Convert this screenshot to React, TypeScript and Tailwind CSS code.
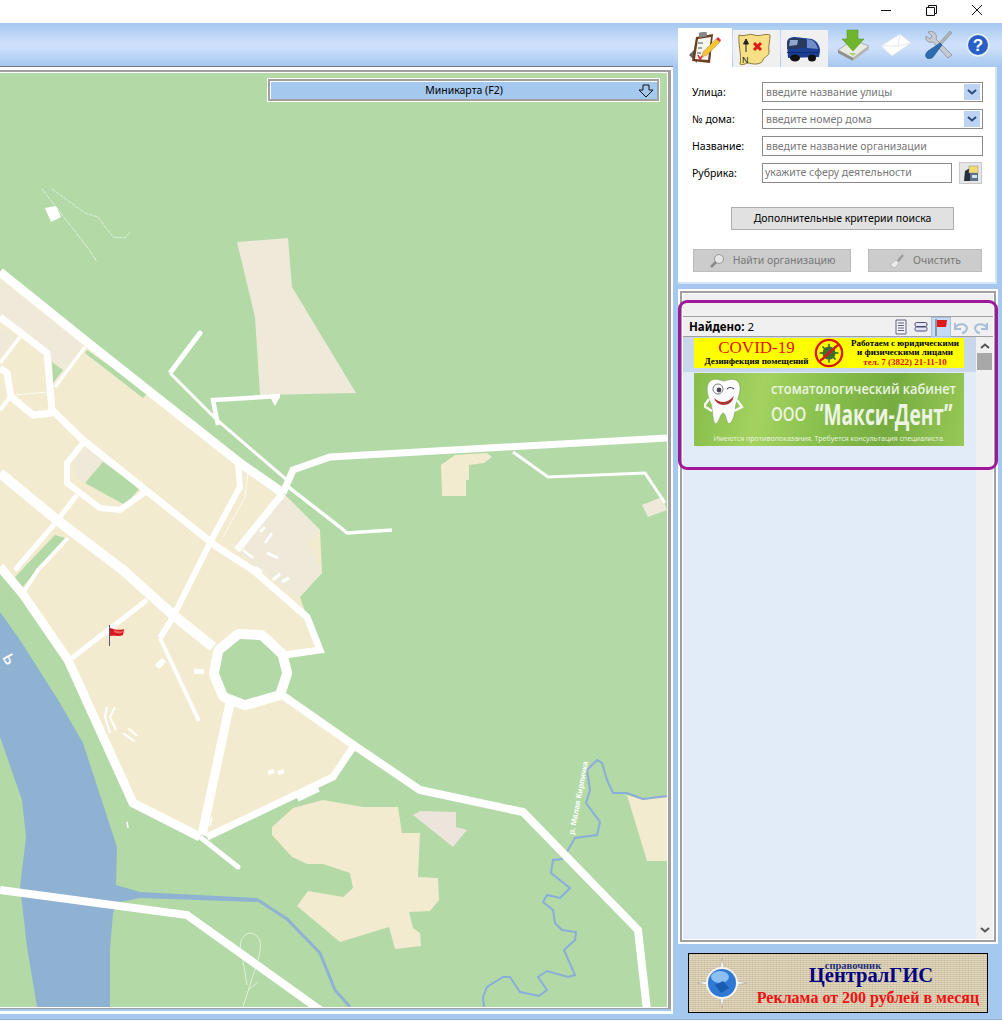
import React from "react";

const ROADS: [number, string][] = [
  [9, "0,272 87,342 240,463 283,493"],
  [3.5, "287,486 340,527 347,533 392,530"],
  [7, "283,493 293,470 330,457 667,438"],
  [5, "200,333 170,373"],
  [3, "170,373 217,420 287,480"],
  [4.5, "280,396 213,400 218,425"],
  [7, "0,317 17,330 47,353 52,410 83,440 217,547 253,570 307,617 320,650 285,655"],
  [7, "0,368 7,373 11,397 33,415 52,413"],
  [4, "10,397 0,410"],
  [3.5, "20,337 0,363"],
  [3.5, "85,347 55,387"],
  [0.8, "15,395 47,392"],
  [10, "0,473 57,520 123,570 173,615 213,647"],
  [6, "238,463 240,487 213,537 173,617 160,638"],
  [4, "160,638 199,721"],
  [7, "283,493 237,550"],
  [5, "77,495 52,527 15,570"],
  [4, "68,538 38,570 25,590"],
  [9, "0,567 22,593 68,660 133,803 200,837"],
  [5, "200,837 238,867"],
  [5, "72,658 147,600"],
  [9, "230,703 202,835"],
  [7, "207,837 333,777 353,747"],
  [8, "282,695 358,748 420,790 523,812 638,930 647,1010"],
  [8, "0,890 187,915 320,1010"],
  [6, "83,443 67,463 67,483 100,508 120,510 145,492"],
  [3, "513,452 548,477 645,473 665,503"],
  [2, "107,707 105,717 110,733"],
  [2, "115,707 110,717 116,730"],
  [2, "123,733 134,741"],
  [2, "128,728 137,736"],
  [6, "157,667 164,660"],
  [5, "194,671 204,672"],
  [4, "268,773 274,771"],
  [4, "278,773 284,771"],
  [8, "297,798 318,788"],
  [1.5, "127,822 128,828"],
  [1.5, "212,817 210,826"],
  [2.5, "260,532 265,527"],
  [2.5, "265,543 272,533"],
  [2.5, "243,550 253,558"],
  [2.5, "267,553 278,558"],
  [3, "255,567 262,572"],
  [3, "273,580 280,574"],
  [3, "282,582 289,578"],
  [0.8, "248,473 245,497 223,537"],
];

const Map = () => (
  <svg viewBox="0 73 667 934" className="block h-[934px] w-[667px]">
    <rect x="0" y="73" width="667" height="934" fill="#b2d9a6" />
    <polygon
      fill="#f3ebcf"
      points="0,272 283,493 320,530 322,573 300,597 307,617 320,650 285,655 282,695 358,748 333,777 207,837 132,803 68,660 22,593 0,567"
    />
    <g fill="#efe9da">
      <polygon points="0,280 83,345 65,370 50,357 20,330 0,315" />
      <polygon points="0,330 17,337 0,357" />
      <polygon points="283,493 320,530 308,543 322,573 298,597 237,552" />
      <polygon points="237,242 288,238 292,287 356,393 260,395 255,317" />
      <polygon points="642,505 662,497 667,510 648,517" />
      <polygon points="87,447 103,462 85,483 77,477 73,460" />
    </g>
    <polygon fill="#ebe5dc" points="413,815 420,811 456,812 456,827 467,830 453,847" />
    <g fill="#f3ebcf">
      <polygon points="441,465 455,455 487,453 492,457 484,463 469,465 469,480 466,480 466,496 442,496" />
      <polygon points="272,827 293,808 323,800 363,807 398,807 402,833 420,833 418,877 438,878 439,900 430,911 409,912 413,928 420,933 421,946 395,949 389,927 340,942 297,906 308,891 343,897 353,888 350,873 323,864 307,864 292,857 272,835" />
      <polygon points="627,795 643,800 667,797 667,861 647,861" />
    </g>
    <g fill="#b2d9a6">
      <polygon points="52,362 63,370 53,383" />
      <polygon points="87,350 148,393 143,398 85,353" />
      <polygon points="103,462 140,488 125,505 85,483" />
      <polygon points="55,535 65,538 35,572 22,588 14,578" />
    </g>
    <polygon
      fill="#8fb2d3"
      points="0,612 20,640 60,703 83,743 117,847 116,885 140,892 258,898 258,902 140,898 116,903 113,913 110,950 110,1007 37,1007 27,947 22,903 20,887 26,837 22,800 0,737"
    />
    <polyline fill="none" stroke="#8fb2d3" strokeWidth="3" points="258,900 287,919 320,953 335,990 350,1007" />
    <polyline
      fill="none"
      stroke="#8aaddb"
      strokeWidth="2"
      points="667,796 643,799 627,793 613,793 607,780 602,763 597,760 587,770 590,790 586,803 600,822 597,835 575,838 568,850 562,859 553,860 551,873 570,888 560,898 547,895 543,902 553,910 555,923 562,930 576,932 575,940 564,950 575,975 568,977 547,971 538,977 547,990 539,996 520,992 510,977 503,977 487,987 483,997 484,1007"
    />
    {ROADS.map(([w, pts], i) => (
      <polyline key={i} fill="none" stroke="#fff" strokeWidth={w} strokeLinejoin="miter" points={pts} />
    ))}
    <circle cx="238" cy="867" r="2.5" fill="#fff" />
    <circle cx="200" cy="333" r="2.5" fill="#fff" />
    <polygon
      fill="#b2d9a6"
      stroke="#fff"
      strokeWidth="20"
      strokeLinejoin="round"
      paintOrder="stroke"
      points="240,639 260,640 278,657 282,673 276,691 245,700 227,693 219,673 223,653"
    />
    <polygon fill="#fff" points="45,208 56,206 61,217 51,222" />
    <polygon fill="#fff" points="270,397 280,397 275,406" />
    <g fill="none" stroke="#fff" strokeWidth="0.6">
      <polyline points="42,189 88,248 97,262" strokeDasharray="6 1" />
      <polyline points="52,189 85,213 98,217 113,237 125,238 130,232" strokeDasharray="4 1" />
      <path d="M243 1007 L258 960 C262 945 262 935 250 933 C240 935 238 945 243 960 L247 985" />
      <path d="M248 990 L258 982" />
    </g>
    <g fill="#fff">
      <text x="0" y="0" fontSize="8" fontWeight="700" transform="translate(574 835) rotate(-79)" fontFamily="Liberation Sans, sans-serif">
        р. Малая Кирпичка
      </text>
      <text x="0" y="0" fontSize="20" transform="translate(2 657) rotate(62)" fontFamily="Liberation Sans, sans-serif">
        ь
      </text>
    </g>
    <line x1="109.5" y1="625" x2="109.5" y2="646" stroke="#55586a" strokeWidth="1" />
    <path d="M110 628 C114 629 118 631 124 629 L123 635 C118 637 114 635 110 636 Z" fill="#d81820" />
    <path d="M114 630 C117 631 120 632 123 631 L122 633 C119 634 116 633 114 632 Z" fill="#f06060" />
  </svg>
);

const ClipboardIcon = () => (
  <svg viewBox="0 0 32 32" className="h-[32px] w-[32px]">
    <polygon points="0,23 8,15 8,31" fill="#666" />
    <polygon points="7,5 24,2 21,31 3,29" fill="#6b3f22" />
    <polygon points="9,7 22,5 19,28 6,27" fill="#f6f6f0" />
    <rect x="10" y="0" width="8" height="5" rx="1" fill="#888" transform="rotate(-8 14 3)" />
    <g stroke="#888" strokeWidth="1.4">
      <path d="M9 11 H14 M9 16 H13 M8 21 H12" />
    </g>
    <path d="M9 23 L11 27 L16 21" fill="none" stroke="#d22" strokeWidth="1.6" />
    <polygon points="14,20 27,7 31,10 18,23 13,25" fill="#f3c52e" stroke="#a86" strokeWidth="0.5" />
    <polygon points="27,7 29,5 32,8 31,10" fill="#d33" />
  </svg>
);

const MapIcon = () => (
  <svg viewBox="0 0 34 34" className="h-[34px] w-[34px]">
    <path
      d="M2 3 C8 5 12 1 17 3 C23 5 28 1 33 3 C33 10 31 14 32 20 C32 25 27 24 26 28 C25 32 18 33 12 31 C8 31 6 34 3 32 C5 24 1 12 2 3 Z"
      fill="#f6df84"
      stroke="#8d7a3a"
      strokeWidth="1"
    />
    <path d="M9 20 V9 M6.5 12 L9 7 L11.5 12 Z" stroke="#222" strokeWidth="1" fill="#222" />
    <text x="5" y="31" fontSize="9" fill="#222" fontFamily="Liberation Sans, sans-serif">
      N
    </text>
    <path d="M17 11 L24 18 M24 11 L17 18" stroke="#e01818" strokeWidth="3" />
  </svg>
);

const BusIcon = () => (
  <svg viewBox="0 0 34 26" className="h-[26px] w-[34px]">
    <path d="M1 7 C1 3 4 1 9 1 L26 3 C31 5 34 10 34 15 L33 21 L2 22 Z" fill="#1c3f96" />
    <path d="M2 4 C4 2 8 2 20 3 L20 12 L1 13 Z" fill="#2a3a5c" />
    <path d="M4 4 L12 4 L11 9 L3 10 Z" fill="#8fa8cc" />
    <path d="M21 3 L26 4 C29 6 31 9 32 13 L21 12 Z" fill="#6f8fc8" />
    <path d="M1 16 L33 16 L33 17 L1 17 Z" fill="#0f2a70" />
    <ellipse cx="9" cy="22" rx="5" ry="3.5" fill="#111" />
    <ellipse cx="26" cy="22" rx="4" ry="3.5" fill="#111" />
  </svg>
);

const DownloadIcon = () => (
  <svg viewBox="0 0 32 32" className="h-[32px] w-[32px]">
    <polygon points="1,21 16,11 32,17 16,29" fill="#e8ebe2" stroke="#9a9a9a" strokeWidth="0.7" />
    <polygon points="1,21 16,29 16,32 1,24" fill="#8f8f8f" />
    <polygon points="16,29 32,17 32,20 16,32" fill="#b5b5b5" />
    <polygon points="10,1 21,1 21,10 27,10 16,22 5,10 10,10" fill="#6fb62d" stroke="#4f8f1c" strokeWidth="0.5" />
    <polygon points="12,24 19,24 16,27" fill="#a8d26a" />
  </svg>
);

const MailIcon = () => (
  <svg viewBox="0 0 32 24" className="h-[24px] w-[32px]">
    <polygon points="1,13 20,1 31,10 12,23" fill="#ffffff" stroke="#d8dee6" strokeWidth="0.6" />
    <path d="M1 13 L18 13 L20 1 M18 13 L31 10" fill="none" stroke="#dde2e8" strokeWidth="0.8" />
  </svg>
);

const ToolsIcon = () => (
  <svg viewBox="0 0 28 28" className="h-[28px] w-[28px]">
    <path d="M3 1 L7 5 L5 8 L1 5 C0 10 4 12 8 11 L23 27 L27 24 L11 8 C13 3 8 -1 3 1 Z" fill="#c8ccd0" stroke="#7f8488" strokeWidth="0.7" />
    <path d="M27 2 L25 0 L14 12 L16 14 Z" fill="#aeb3b8" stroke="#777" strokeWidth="0.4" />
    <path d="M15 12 L17 14 L8 26 C6 28 2 28 1 26 C0 24 1 22 3 20 Z" fill="#2d6cb0" stroke="#1d4a80" strokeWidth="0.6" />
  </svg>
);

const HelpIcon = () => (
  <svg viewBox="0 0 24 24" className="h-[24px] w-[24px]">
    <circle cx="12" cy="12" r="11.5" fill="#e8eef8" />
    <circle cx="12" cy="12" r="10" fill="#2a5fc4" />
    <text x="12" y="18" fontSize="17" fontWeight="700" textAnchor="middle" fill="#fff" fontFamily="Liberation Sans, sans-serif">
      ?
    </text>
  </svg>
);

const Chevron = () => (
  <svg viewBox="0 0 10 6" className="h-[6px] w-[10px]">
    <path d="M1 1 L5 4.5 L9 1" fill="none" stroke="#2b4a80" strokeWidth="2" />
  </svg>
);

const Field = ({ label, text, combo }: { label: string; text: string; combo?: boolean }) => (
  <div className="flex h-[20px] items-center">
    <span className="w-[70px] text-[10.5px] leading-none text-black">{label}</span>
    <div className="flex h-[20px] w-[221px] items-center border border-[#8a8a8a] bg-white pl-[3px] text-[10.5px] text-[#777]">
      <span className="flex-1 pt-px">{text}</span>
      {combo && (
        <span className="mr-[2px] flex h-[16px] w-[16px] items-center justify-center bg-[#bcd3f3]">
          <Chevron />
        </span>
      )}
    </div>
  </div>
);

const SearchForm = () => (
  <div className="ml-[5px] flex h-[217px] w-[319px] flex-col border-b-2 border-r-2 border-[#d4e3f5] bg-white pl-[14px] pt-[15px]">
    <div className="flex flex-col gap-[7px]">
      <Field label="Улица:" text="введите название улицы" combo />
      <Field label="№ дома:" text="введите номер дома" combo />
      <Field label="Название:" text="введите название организации" />
      <div className="flex h-[20px] items-center">
        <span className="w-[70px] text-[10.5px] leading-none text-black">Рубрика:</span>
        <div className="flex h-[20px] w-[190px] items-center border border-[#8a8a8a] pl-[2px] text-[10.5px] text-[#777]">
          укажите сферу деятельности
        </div>
        <div className="ml-[7px] flex h-[22px] w-[23px] items-center justify-center border border-[#c8c8c8] bg-[#e6e6e6]">
          <svg viewBox="0 0 18 18" className="h-[18px] w-[18px]">
            <path d="M2 17 L3 7 L8 4 L8 17 Z" fill="#26303c" />
            <rect x="7" y="2" width="9" height="7" fill="#f2dc72" stroke="#889" strokeWidth="0.5" />
            <rect x="8" y="9" width="8" height="8" fill="#5d7288" />
            <rect x="10" y="11" width="5" height="3" fill="#cfe0ee" />
          </svg>
        </div>
      </div>
    </div>
    <div className="ml-[39px] mt-[24px] flex h-[23px] w-[223px] items-center justify-center border border-[#adadad] bg-[#e1e1e1] text-[10.5px] text-black">
      Дополнительные критерии поиска
    </div>
    <div className="mt-[19px] flex gap-[17px] pl-px">
      <div className="flex h-[23px] w-[158px] items-center justify-center gap-[8px] border border-[#bdbdbd] bg-[#cccccc] text-[10.5px] text-[#777]">
        <svg viewBox="0 0 16 16" className="h-[16px] w-[16px]">
          <circle cx="10" cy="6" r="4.5" fill="#e6e6e6" stroke="#999" />
          <path d="M7 9 L2 14" stroke="#888" strokeWidth="2.5" />
        </svg>
        Найти организацию
      </div>
      <div className="flex h-[23px] w-[114px] items-center justify-center gap-[8px] border border-[#bdbdbd] bg-[#cccccc] text-[10.5px] text-[#777]">
        <svg viewBox="0 0 16 16" className="h-[16px] w-[16px]">
          <path d="M1 12 L7 7 L10 10 L6 15 Z" fill="#ececec" stroke="#aaa" strokeWidth="0.6" />
          <path d="M9 8 L14 2" stroke="#999" strokeWidth="2" />
        </svg>
        Очистить
      </div>
    </div>
  </div>
);

const CovidBanner = () => (
  <div className="flex h-[30px] w-[270px] items-center bg-[#ffff00] [font-family:'Liberation_Serif',serif]">
    <div className="flex w-[119px] flex-col items-center pl-[6px]">
      <span className="text-[17px] leading-[16px] text-[#e01010]">COVID-19</span>
      <span className="whitespace-nowrap text-[9px] font-bold leading-[11px] text-black">Дезинфекция помещений</span>
    </div>
    <svg viewBox="0 0 32 32" className="ml-[1px] h-[30px] w-[30px] shrink-0">
      <circle cx="16" cy="16" r="14" fill="#ffff00" stroke="#d81818" strokeWidth="2.5" />
      <g stroke="#2f5a28" strokeWidth="1.6">
        <path d="M16 6 V26 M6 16 H26 M9 9 L23 23 M23 9 L9 23" />
      </g>
      <circle cx="16" cy="16" r="7" fill="#3d6e30" />
      <path d="M6 25 L26 7" stroke="#d81818" strokeWidth="2.5" />
    </svg>
    <div className="flex flex-1 flex-col items-center whitespace-nowrap pl-[2px] text-[9px] font-bold leading-[8.8px] text-black">
      <span>Работаем с юридическими</span>
      <span>и физическими лицами</span>
      <span className="mt-[2px] text-[#e01010]">тел. 7 (3822) 21-11-10</span>
    </div>
  </div>
);

const DentBanner = () => (
  <div className="relative mt-px flex h-[73px] w-[270px] flex-col overflow-hidden bg-[linear-gradient(100deg,#86bd4b_0%,#a4d25f_25%,#86be4c_50%,#76ac40_72%,#98c957_100%)] text-[#eef4e4] [font-family:'Open_Sans',sans-serif]">
    <div className="flex">
      <svg viewBox="0 0 40 50" className="ml-[10px] mt-[4px] h-[50px] w-[40px] shrink-0">
        <path d="M5 5 C11 0 15 3 20 4 C26 2 32 1 35 6 C38 13 34 21 32 27 C31 35 30 44 25 47 C22 45 22 36 19 36 C16 37 15 47 11 47 C8 42 9 33 7 27 C4 20 1 11 5 5 Z" fill="#fbfbfb" stroke="#7a9a5e" strokeWidth="0.6" />
        <path d="M5 22 L0 29 L8 34 M33 23 L38 30 L30 34" fill="none" stroke="#fbfbfb" strokeWidth="2.4" />
        <circle cx="14" cy="12" r="5" fill="#fff" stroke="#556" strokeWidth="0.8" />
        <circle cx="15" cy="13" r="2.4" fill="#445" />
        <path d="M23 12 Q26 9 30 12" fill="none" stroke="#445" strokeWidth="1.2" />
        <path d="M10 21 Q20 30 30 19 Q28 28 19 28 Q12 27 10 21 Z" fill="#a33" />
      </svg>
      <div className="ml-[27px] flex flex-col">
        <span className="mt-[7px] origin-left whitespace-nowrap text-[14px] font-semibold leading-[18px] scale-x-[0.91]">
          стоматологический кабинет
        </span>
        <div className="mt-[2px] flex items-center">
          <span className="w-[44px] origin-left text-[20px] font-semibold leading-[28px] scale-x-[0.75]">ООО</span>
          <span className="origin-left whitespace-nowrap text-[29px] font-bold leading-[28px] scale-x-[0.66]">
            “Макси-Дент”
          </span>
        </div>
      </div>
    </div>
    <span className="absolute bottom-[3px] left-0 w-full whitespace-nowrap text-center text-[7px] leading-[9px]">
      Имеются противопоказания. Требуется консультация специалиста.
    </span>
  </div>
);

const Toolbar = () => (
  <div className="flex items-center">
    <svg viewBox="0 0 14 16" className="h-[16px] w-[14px]">
      <path d="M2 1 H12 V15 H2 Z" fill="#eef0f6" stroke="#62647e" />
      <path d="M4 4 H10 M4 6.5 H10 M4 9 H10 M4 11.5 H10" stroke="#62647e" />
    </svg>
    <svg viewBox="0 0 14 12" className="ml-[6px] h-[12px] w-[14px]">
      <rect x="1" y="1.5" width="12" height="4" rx="1.5" fill="#e4e6f2" stroke="#4c4f78" />
      <rect x="1" y="6" width="12" height="4" rx="1.5" fill="#e4e6f2" stroke="#4c4f78" />
    </svg>
    <div className="ml-[3px] flex h-[20px] w-[20px] items-center justify-center border border-[#a8c0e0] bg-[#c5daf3]">
      <svg viewBox="0 0 14 18" className="h-[18px] w-[14px]">
        <line x1="2" y1="1" x2="2" y2="18" stroke="#556" />
        <path d="M3 2 H13 L12 9 H3 Z" fill="#e01818" />
      </svg>
    </div>
    <svg viewBox="0 0 14 14" className="ml-[3px] h-[14px] w-[14px]">
      <path d="M1 3 L1 9 L7 9 M1 8 C4 3 12 3 13 8 C13 11 10 13 8 13" fill="none" stroke="#a8bdd6" strokeWidth="2" />
    </svg>
    <svg viewBox="0 0 14 14" className="ml-[6px] mr-[4px] h-[14px] w-[14px]">
      <path d="M13 3 L13 9 L7 9 M13 8 C10 3 2 3 1 8 C1 11 4 13 6 13" fill="none" stroke="#a8bdd6" strokeWidth="2" />
    </svg>
  </div>
);

const Results = () => (
  <div className="relative ml-[5px] mt-[5px] h-[655px] w-[320px] border-2 border-white">
    <div className="h-full border-2 border-[#a0a0a0]">
      <div className="flex h-full flex-col border border-white bg-[#f0f0f0]">
        <div className="h-[23px] border-b border-[#a0a0a0]" />
        <div className="flex h-[20px] items-center justify-between border-b border-[#a0a0a0] pl-[6px] pr-px text-[11.5px] text-black">
          <span>
            <b className="font-bold">Найдено:</b> 2
          </span>
          <Toolbar />
        </div>
        <div className="flex min-h-0 flex-1">
          <div className="flex-1 bg-[#e1ecf8]">
            <div className="h-[35px] bg-[#c8d8ea] pl-[11px] pt-px">
              <CovidBanner />
            </div>
            <div className="pl-[11px]">
              <DentBanner />
            </div>
          </div>
          <div className="flex w-[17px] flex-col items-center bg-[#f0f0f0]">
            <svg viewBox="0 0 10 6" className="mt-[6px] h-[6px] w-[10px]">
              <path d="M1 5 L5 1.5 L9 5" fill="none" stroke="#555" strokeWidth="2" />
            </svg>
            <div className="mt-[4px] h-[17px] w-[15px] bg-[#a8a8a8]" />
            <svg viewBox="0 0 10 6" className="mb-[6px] mt-auto h-[6px] w-[10px]">
              <path d="M1 1 L5 4.5 L9 1" fill="none" stroke="#555" strokeWidth="2" />
            </svg>
          </div>
        </div>
      </div>
    </div>
    <div className="pointer-events-none absolute left-[-2px] top-[9px] h-[170px] w-[320px] rounded-[9px] border-[3.5px] border-[#a0189a]" />
  </div>
);

const AdBanner = () => (
  <div className="ml-[15px] mt-[9px] flex h-[60px] w-[300px] items-start border border-black bg-[#d9ceb4] [background-image:repeating-linear-gradient(0deg,#0000_0px,#0000_1px,#a8987a55_1px,#a8987a55_2px),repeating-linear-gradient(90deg,#0000_0px,#0000_1px,#fff6dc44_1px,#fff6dc44_3px)] [font-family:'Liberation_Serif',serif]">
    <svg viewBox="0 0 50 50" className="ml-[8px] h-[50px] w-[50px] shrink-0 self-center">
      <polygon points="25,0 29,21 50,25 29,29 25,50 21,29 0,25 21,21" fill="#f4f4f0" stroke="#a8a090" strokeWidth="0.5" />
      <circle cx="25" cy="25" r="16" fill="#f4f4f0" />
      <circle cx="25" cy="25" r="14" fill="#2f78d4" />
      <ellipse cx="23" cy="19" rx="9" ry="6" fill="#8cc0f0" />
      <path d="M18 27 L26 23 L32 30 L24 35 Z" fill="#1c5cb0" />
    </svg>
    <div className="ml-[9px] flex w-[224px] flex-col items-center">
      <span className="mr-[30px] mt-[7px] text-[10.5px] font-bold leading-[10px] text-[#24307a]">справочник</span>
      <span className="ml-[6px] mt-[-6px] text-[20.5px] font-bold leading-[20px] text-[#000080]">ЦентралГИС</span>
      <span className="mt-[5px] whitespace-nowrap text-[16px] font-bold leading-[16px] text-[#f01010]">
        Реклама от 200 рублей в месяц
      </span>
    </div>
  </div>
);

const Gradient = "bg-[linear-gradient(180deg,#a5c8ef_0%,#cddffa_45%,#cddffa_58%,#a5c8ef_100%)]";

export default function App() {
  return (
    <div className="flex h-[1021px] w-[1002px] flex-col overflow-hidden bg-white [font-family:'Noto_Sans',sans-serif]">
      {/* title bar */}
      <div className="flex h-[23px] shrink-0 items-center justify-end">
        <svg viewBox="0 0 110 23" className="h-[23px] w-[110px]">
          <g fill="none" stroke="#111" strokeWidth="1">
            <path d="M0 10.5 H10" />
            <path d="M45.5 7.5 H53.5 V15.5 H45.5 Z M47.5 7 V5.5 H55.5 V13.5 H54" />
            <path d="M91 5 L101 15 M101 5 L91 15" />
          </g>
        </svg>
        <div className="w-[11px]" />
      </div>

      <div className="flex min-h-0 flex-1 bg-[#a5c8ef]">
        {/* map side */}
        <div className="w-[673px] shrink-0">
          <div className={`h-[44px] border-b border-[#777] ${Gradient}`} />
          <div className="h-[947px] border-b-[3px] border-r-2 border-t-[3px] border-white">
            <div className="h-[939px] border-b-[3px] border-r-[3px] border-t-2 border-[#a0a0a0]">
              <div className="relative h-[936px] w-[668px] border-b border-r border-t border-white">
                <Map />
                <div className="absolute left-[267px] top-[5px] h-[24px] w-[393px] border border-white">
                  <div className="h-full border-2 border-[#a0a0a0]">
                    <div className="flex h-full items-center justify-center border-l border-t border-white bg-[#a5c8ef] text-[10.5px] text-black">
                      Миникарта (F2)
                      <svg viewBox="0 0 16 14" className="absolute right-[5px] h-[14px] w-[16px]">
                        <path d="M5 1 H11 V6 H15 L8 13 L1 6 H5 Z" fill="none" stroke="#111" strokeWidth="1" />
                      </svg>
                    </div>
                  </div>
                </div>
              </div>
            </div>
          </div>
        </div>

        {/* search side */}
        <div className="min-w-0 flex-1">
          <div className={`flex h-[44px] items-end pl-[5px] ${Gradient}`}>
            <div className="flex h-[39px] w-[54px] items-center justify-center bg-white">
              <ClipboardIcon />
            </div>
            <div className="ml-px flex h-[37px] w-[47px] items-center justify-center bg-[#f0f0f0] pr-[5px]">
              <MapIcon />
            </div>
            <div className="ml-px flex h-[37px] w-[47px] items-center justify-center bg-[#f0f0f0] pr-[3px]">
              <BusIcon />
            </div>
            <div className="mb-[6px] ml-[9px] flex items-center">
              <DownloadIcon />
              <div className="ml-[11px]">
                <MailIcon />
              </div>
              <div className="ml-[13px]">
                <ToolsIcon />
              </div>
              <div className="ml-[13px]">
                <HelpIcon />
              </div>
            </div>
          </div>
          <SearchForm />
          <Results />
          <AdBanner />
        </div>
      </div>
      <div className="h-[2px] shrink-0 border-t border-[#8fb0d8] bg-white" />
    </div>
  );
}
